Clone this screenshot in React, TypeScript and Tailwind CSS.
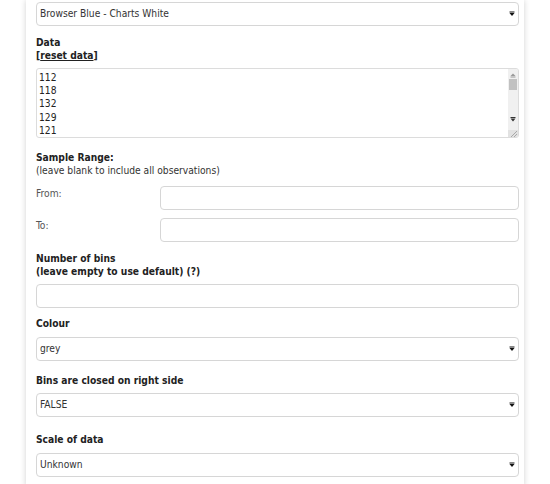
import React from "react";

const font = { fontFamily: '"DejaVu Sans Condensed", "DejaVu Sans", Verdana, sans-serif' };

const Arrow = () => (
  <svg width="6" height="6" viewBox="0 0 6 6" className="shrink-0">
    <rect x="0.5" y="0.5" width="5" height="1" fill="#111" />
    <path d="M0.5 2 H5.5 L3 5 Z" fill="#111" />
  </svg>
);

const Select = ({ value }: { value: string }) => (
  <div className="flex h-[24px] items-center justify-between rounded-[4px] border border-[#d6d6d6] bg-white pl-[3px] pr-[3px] text-[10.2px] text-[#333]">
    <span>{value}</span>
    <Arrow />
  </div>
);

const Input = () => (
  <div className="h-[24px] rounded-[4px] border border-[#d6d6d6] bg-white" />
);

const Label = ({ children, className = "" }: { children: React.ReactNode; className?: string }) => (
  <div className={`text-[10.2px] font-bold leading-[13px] text-[#222] ${className}`}>{children}</div>
);

const DataBox = () => (
  <div className="mt-[6px] flex h-[70px] overflow-hidden rounded-[3px] border border-[#dcdcdc] bg-white">
    <div className="flex-1 pl-[2px] pt-[2px] text-[10.2px] leading-[13.2px] text-[#222]">
      {["112", "118", "132", "129", "121"].map((n) => (
        <div key={n}>{n}</div>
      ))}
    </div>
    {/* fake scrollbar */}
    <div className="flex w-[10px] flex-col items-center bg-[#f0f0f0]">
      <svg width="6" height="5" viewBox="0 0 6 5" className="mt-[4px]">
        <path d="M0.5 3 L3 0.5 L5.5 3 Z" fill="#999" />
        <rect x="0.5" y="3.5" width="5" height="1" fill="#999" />
      </svg>
      <div className="mt-[1px] h-[11px] w-[8px] bg-[#c1c1c1]" />
      <div className="flex-1" />
      <svg width="6" height="5" viewBox="0 0 6 5" className="mb-[8px]">
        <rect x="0.5" y="0" width="5" height="1" fill="#333" />
        <path d="M0.5 1.5 H5.5 L3 4.5 Z" fill="#333" />
      </svg>
      <div className="relative h-[7px] w-full bg-[#e2e2e2]">
        <svg width="10" height="7" viewBox="0 0 10 7" className="absolute inset-0">
          <path d="M9 1 L3 7 M9 4 L6 7" stroke="#999" strokeWidth="0.8" />
        </svg>
      </div>
    </div>
  </div>
);

export default function App() {
  return (
    <div className="min-h-[484px] bg-white" style={font}>
      <div className="ml-[26px] min-h-[484px] w-[498px] bg-white pb-[10px] pl-[10px] pr-[5px] pt-[2px] shadow-[0_0_6px_rgba(0,0,0,0.18)]">
        <Select value="Browser Blue - Charts White" />

        <Label className="mt-[10px]">
          Data
          <br />
          [<span className="underline">reset data</span>]
        </Label>
        <DataBox />

        <Label className="mt-[13px]">Sample Range:</Label>
        <div className="text-[10.2px] leading-[13px] text-[#333]">(leave blank to include all observations)</div>

        <div className="mt-[9px] flex flex-col gap-[8px]">
          <div className="flex">
            <div className="w-[124px] pt-[1px] text-[10.2px] leading-[13px] text-[#555]">From:</div>
            <div className="flex-1">
              <Input />
            </div>
          </div>
          <div className="flex">
            <div className="w-[124px] pt-[1px] text-[10.2px] leading-[13px] text-[#555]">To:</div>
            <div className="flex-1">
              <Input />
            </div>
          </div>
        </div>

        <Label className="mt-[10px]">
          Number of bins
          <br />
          (leave empty to use default) (?)
        </Label>
        <div className="mt-[6px]">
          <Input />
        </div>

        <Label className="mt-[9px]">Colour</Label>
        <div className="mt-[7px]">
          <Select value="grey" />
        </div>

        <Label className="mt-[13px]">Bins are closed on right side</Label>
        <div className="mt-[6px]">
          <Select value="FALSE" />
        </div>

        <Label className="mt-[16px]">Scale of data</Label>
        <div className="mt-[7px]">
          <Select value="Unknown" />
        </div>
      </div>
    </div>
  );
}
